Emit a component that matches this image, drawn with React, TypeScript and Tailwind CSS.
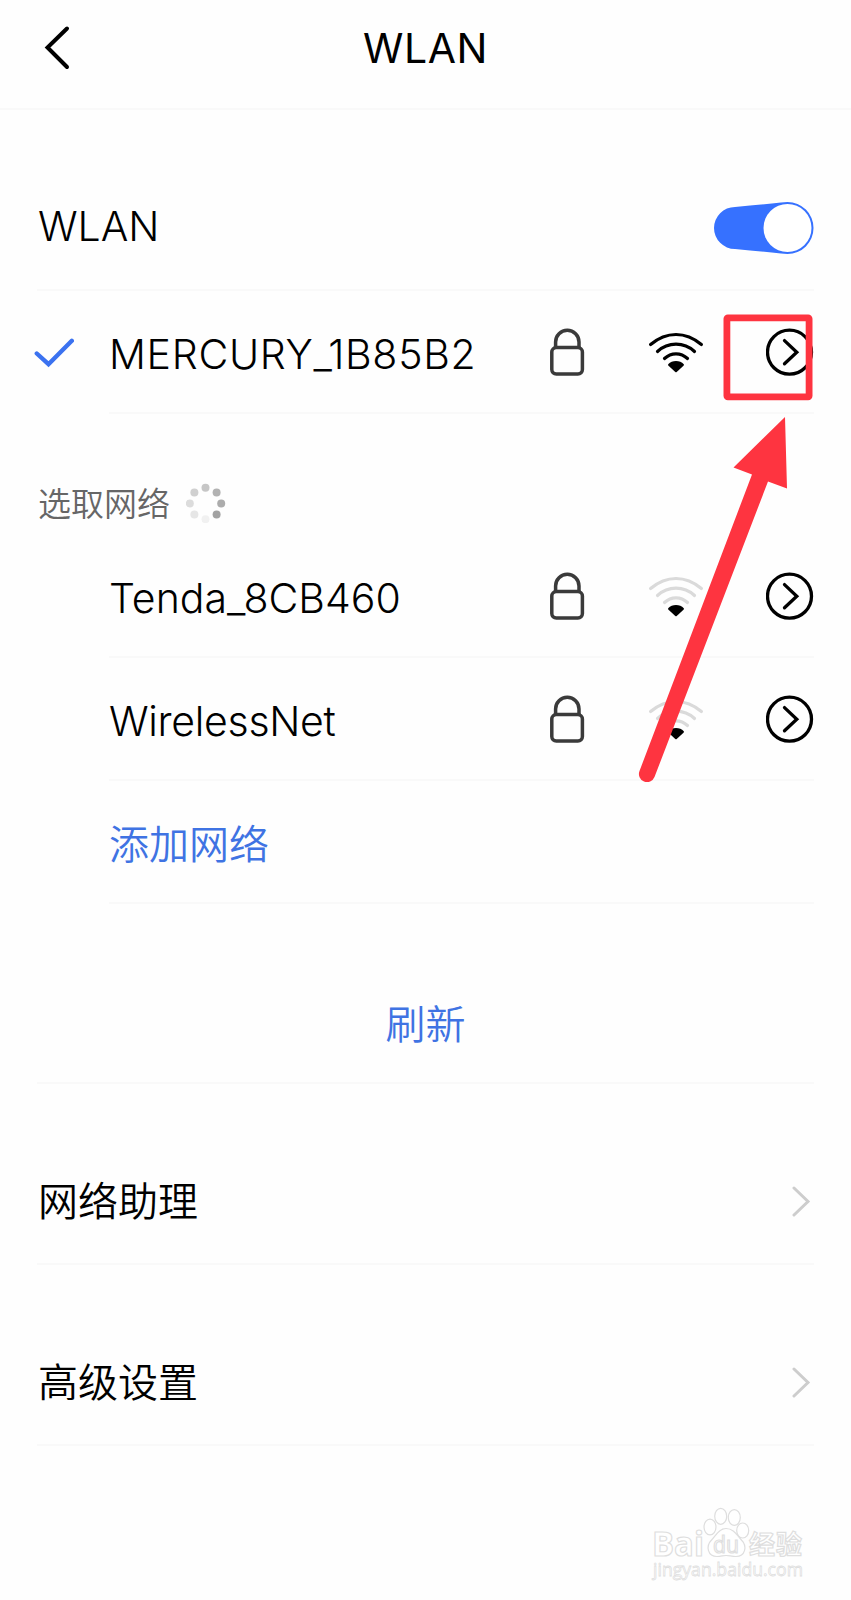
import type { ReactNode } from "react";

const latin = "font-['Inter','Noto_Sans_CJK_SC',sans-serif]";
const han = "font-['Noto_Sans_CJK_SC',sans-serif]";

function LockIcon() {
  return (
    <svg className="h-12 w-9 shrink-0" viewBox="0 0 36 48" fill="none" stroke="#3a3a3a" strokeWidth="3.5">
      <path d="M6.6 19.5V14a11.7 11.7 0 0 1 23.4 0v5.5" />
      <rect x="2.8" y="19.6" width="30.6" height="26.4" rx="4.5" />
    </svg>
  );
}

function WifiIcon({ strong }: { strong?: boolean }) {
  return (
    <svg className="h-12 w-14 shrink-0" viewBox="0 0 56 48" fill="none">
      <g stroke={strong ? "#000" : "#dadada"} strokeWidth="3.2" strokeLinecap="round">
        <path d="M2.6 16.5Q14.500 6.500 28 6.500T53.400 16.500" />
        <path d="M9.500 23.500Q17.500 16.200 28 16.200T46.500 23.500" />
        <path d="M16.500 30.500Q21.500 25.800 28 25.800T39.500 30.500" />
      </g>
      <path d="M20.200 36.200Q23.300 33 28 33t7.800 3.200Q36.200 37 35.500 37.700L28.700 44q-.7.6-1.400 0L20.500 37.700Q19.800 37 20.200 36.200Z" fill="#000" />
    </svg>
  );
}

function DetailIcon() {
  return (
    <svg className="h-12 w-12 shrink-0" viewBox="0 0 48 48" fill="none" stroke="#000" strokeWidth="3.3">
      <circle cx="23.500" cy="24.200" r="22" />
      <path d="M18.500 12.600 30.800 24.200 18.500 35.800" strokeLinecap="round" />
    </svg>
  );
}

function CheckIcon() {
  return (
    <svg className="h-8 w-10" viewBox="0 0 40 32" fill="none" stroke="#3b72f0" strokeWidth="4.400" strokeLinecap="round">
      <path d="M2.800 17.500 14.500 28.200 37.800 4.800" />
    </svg>
  );
}

function Toggle() {
  return (
    <svg className="h-[54px] w-[100px]" viewBox="0 0 100 54">
      <path d="M21 6Q47 3.500 67 1.500C69 1.200 71 1 73.500 1a26 26 0 0 1 0 52C71 53 69 52.800 67 52.500Q47 50.500 21 48a21 21 0 0 1 0-42Z" fill="#3671ff" />
      <circle cx="73.500" cy="27" r="24" fill="#fff" />
    </svg>
  );
}

function Spinner() {
  const shades = ["#c6c6c6", "#b2b2b2", "#acacac", "#a2a2a2", "#f1f1f1", "#e6e6e6", "#dcdcdc", "#d0d0d0"];
  return (
    <svg className="h-10 w-10" viewBox="0 0 40 40">
      {shades.map((fill, i) => {
        const a = (i * Math.PI) / 4;
        return <circle key={fill} cx={19.5 + 15.7 * Math.sin(a)} cy={20.5 - 15.7 * Math.cos(a)} r="4" fill={fill} />;
      })}
    </svg>
  );
}

function NetworkRow({ name, tracking, height, connected }: { name: string; tracking: string; height: string; connected?: boolean }) {
  return (
    <div className={`flex ${height} items-center`}>
      <div className="mb-0.5 -ml-[3px] w-[75px] shrink-0">{connected && <CheckIcon />}</div>
      <div className="flex h-full flex-1 items-center border-b-2 border-[#f9f9f9]">
        <span className={`flex-1 pt-1.5 text-[41px] leading-none font-light whitespace-nowrap ${tracking}`}>{name}</span>
        <LockIcon />
        <div className="w-[63px]" />
        <WifiIcon strong={connected} />
        <div className="w-[62px]" />
        <DetailIcon />
      </div>
    </div>
  );
}

function LinkRow({ height, children }: { height: string; children: ReactNode }) {
  return (
    <div className={`flex ${height} items-end justify-between border-b-2 border-[#f9f9f9]`}>
      <span className={`${han} mb-[36px] ml-px text-[40px] leading-[56px] font-[350]`}>{children}</span>
      <svg className="mr-[3px] mb-[45px] h-8 w-5" viewBox="0 0 20 32" fill="none" stroke="#cdcdcd" strokeWidth="3" strokeLinecap="round">
        <path d="M3 2 17 15.500 3 29" />
      </svg>
    </div>
  );
}

function Watermark() {
  return (
    <svg className="absolute top-[1500px] left-[645px] h-[90px] w-[170px]" viewBox="0 0 170 90" fill="#fff" stroke="#dedede" strokeWidth="1.200">
      <g fontFamily="Open Sans, Noto Sans CJK SC, sans-serif">
        <text x="7" y="55.500" fontSize="34" fontWeight="bold" textLength="52" lengthAdjust="spacingAndGlyphs">Bai</text>
        <ellipse cx="65" cy="27" rx="6" ry="7.800" />
        <ellipse cx="75.700" cy="16.300" rx="6" ry="8" />
        <ellipse cx="89.300" cy="17.500" rx="6" ry="7.800" />
        <ellipse cx="97.700" cy="30.500" rx="6" ry="7.500" />
        <path d="M81 28.500c-7 0-10 7-14 11-7 7-4 17 5 17 4 0 6-1 9-1s6 1 10 1c9 0 12-10 5-17-4-4-7-11-15-11Z" />
        <text x="68" y="53" fontSize="23" textLength="26" lengthAdjust="spacingAndGlyphs">du</text>
        <text x="104" y="54" fontFamily="Noto Sans CJK SC" fontSize="26" fontWeight="bold" textLength="53">经验</text>
        <text x="8" y="76" fontSize="19" strokeWidth="0.800" textLength="150" lengthAdjust="spacingAndGlyphs">jingyan.baidu.com</text>
      </g>
    </svg>
  );
}

function Highlight() {
  return (
    <svg className="pointer-events-none absolute top-[300px] left-[620px] h-[500px] w-[220px]" viewBox="620 300 220 500">
      <rect x="726.900" y="317.800" width="82.200" height="79" rx="1" fill="none" stroke="#fe3440" strokeWidth="6.800" />
      <path d="M785 417 733.500 467.500 752 474.500 639.500 771a8 8 0 0 0 15 6L768 481.500 787 488.500Z" fill="#fe3440" />
    </svg>
  );
}

export default function App() {
  return (
    <div className={`relative h-[1600px] w-[851px] overflow-hidden bg-[#fefefe] text-black ${latin}`}>
      <header className="grid h-[110px] grid-cols-[1fr_auto_1fr] items-center border-b-2 border-[#f9f9f9] pb-3">
        <svg className="ml-11 h-12 w-7" viewBox="0 0 28 48" fill="none" stroke="#000" strokeWidth="4" strokeLinecap="round">
          <path d="M23 4.500 3.500 23.500 23 43" />
        </svg>
        <h1 className="text-[41px] leading-none font-normal tracking-[0.5px]">WLAN</h1>
      </header>

      <main className="pr-[37px] pl-[37px]">
        <div className="flex h-[181px] items-end justify-between border-b-2 border-[#f9f9f9] pb-[34px]">
          <span className="mb-2 ml-px text-[41px] leading-none font-light">WLAN</span>
          <Toggle />
        </div>

        <NetworkRow name="MERCURY_1B85B2" tracking="tracking-[0.7px]" height="h-[123px]" connected />

        <div className="flex h-[121px] items-center gap-4 pt-[56px]">
          <span className={`${han} ml-px text-[33px] leading-none font-[350] text-[#666]`}>选取网络</span>
          <Spinner />
        </div>

        <NetworkRow name="Tenda_8CB460" tracking="tracking-normal" height="h-[123px]" />
        <NetworkRow name="WirelessNet" tracking="tracking-[-0.3px]" height="h-[123px]" />

        <div className="ml-[72px] flex h-[123px] items-center border-b-2 border-[#f9f9f9]">
          <span className={`${han} text-[40px] leading-none font-[350] text-[#3f73e3]`}>添加网络</span>
        </div>

        <div className="flex h-[180px] items-end justify-center border-b-2 border-[#f9f9f9] pb-[32px]">
          <span className={`${han} text-[40px] leading-[56px] font-[350] text-[#3f73e3]`}>刷新</span>
        </div>

        <LinkRow height="h-[181px]">网络助理</LinkRow>
        <LinkRow height="h-[181px]">高级设置</LinkRow>
      </main>

      <Highlight />
      <Watermark />
    </div>
  );
}
